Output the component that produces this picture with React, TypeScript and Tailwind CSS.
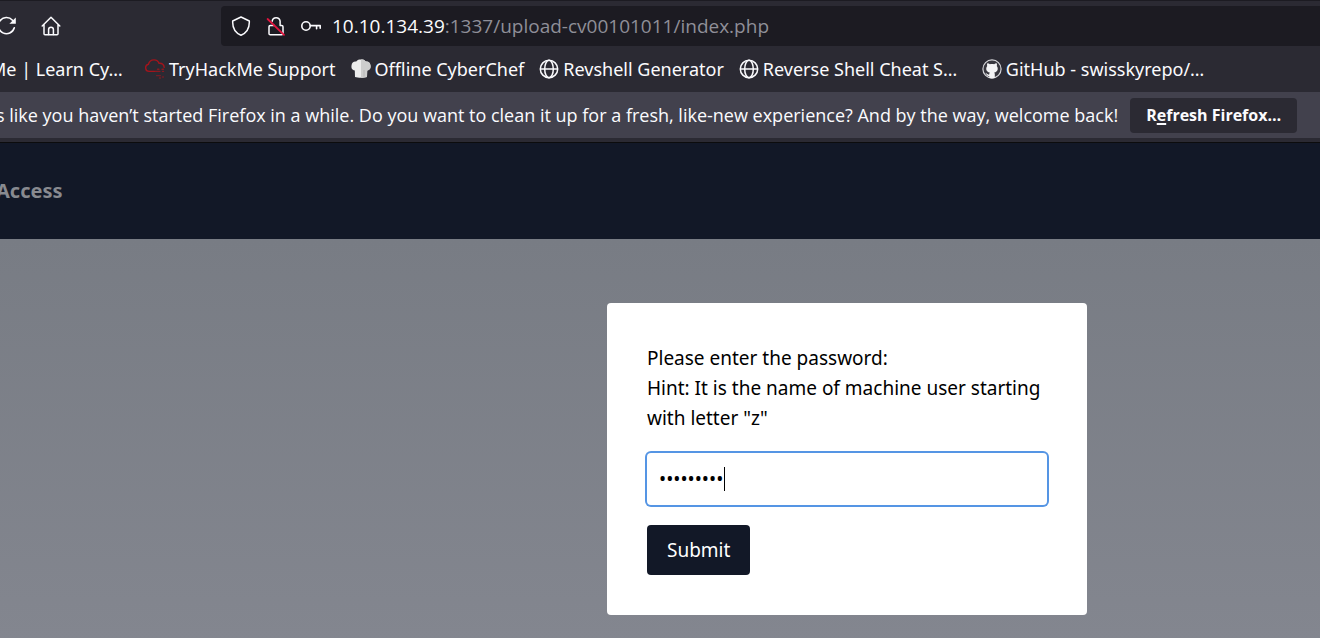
import type { ReactNode } from "react";

function ReloadIcon() {
  return (
    <svg width="20" height="20" viewBox="0 0 20 20" fill="none" stroke="#fbfbfe" strokeWidth="1.6" strokeLinecap="round">
      <path d="M15.5 4.2a8.1 8.1 0 1 0 1.8 7.6" />
      <path d="M18.8 1.4v6.400h-6.400z" fill="#fbfbfe" stroke="none" />
    </svg>
  );
}

function HomeIcon() {
  return (
    <svg width="20" height="20" viewBox="0 0 20 20" fill="none" stroke="#fbfbfe" strokeWidth="1.5" strokeLinecap="round" strokeLinejoin="round">
      <path d="M1.2 10 10 1.2l8.8 8.8M3 8.6v9.2c0 .6.4 1 1 1h12c.6 0 1-.4 1-1V8.6" />
      <path d="M7.6 18.6v-5c0-1.4 1-2.4 2.4-2.4s2.4 1 2.4 2.4v5" />
    </svg>
  );
}

function ShieldIcon() {
  return (
    <svg width="20" height="20" viewBox="0 0 20 20" fill="none" stroke="#fbfbfe" strokeWidth="1.5" strokeLinejoin="round">
      <path d="M10 1 18.3 5c.3 5.8-1.6 11.3-8.3 14.2C3.3 16.3 1.4 10.8 1.7 5z" />
    </svg>
  );
}

function InsecureIcon() {
  return (
    <svg width="20" height="20" viewBox="0 0 20 20" fill="none" strokeLinecap="round" strokeLinejoin="round">
      <path
        d="M6.2 5.2a4 4 0 0 1 7.9 0v4.3h1.6c.8 0 1.3.5 1.3 1.3v6.8c0 .8-.5 1.200-1.300 1.200H4.300c-.8 0-1.300-.4-1.300-1.200v-6.800c0-.8.5-1.300 1.300-1.300h4"
        stroke="#fbfbfe"
        strokeWidth="1.5"
      />
      <path d="M1.600 3 18 18.800" stroke="#e2153f" strokeWidth="1.8" />
    </svg>
  );
}

function KeyIcon() {
  return (
    <svg width="20" height="20" viewBox="0 0 20 20" fill="none" stroke="#fbfbfe" strokeWidth="1.6" strokeLinecap="round" strokeLinejoin="round">
      <circle cx="5" cy="10" r="4.2" />
      <path d="M9.4 9.6h9.8v2.6M15.6 9.6v3.2" />
    </svg>
  );
}

function CloudIcon() {
  return (
    <svg width="20" height="20" viewBox="0 0 20 20" fill="none" stroke="#a3141c" strokeWidth="1.4" strokeLinecap="round">
      <path d="M9.500 12.400H4a3.600 3.600 0 0 1-.6-7.100C4.200 2.400 6.400.9 9 .9c2.500 0 4.300 1.300 5 3.400 2.800-.2 4.800 1.400 5.200 4" />
      <path d="M12.500 10.200h1.500M17 10.200h1.500M9.800 12.400h5M17.500 12.400h1" opacity="0.8" />
      <path d="M11.500 16.600h4M14.500 19h1M17.500 18h1" opacity="0.6" />
    </svg>
  );
}

function ChefIcon() {
  return (
    <svg width="20" height="20" viewBox="0 0 20 20">
      <path
        d="M4 18 3.800 11.500C.8 11 .2 9 .5 6.500.8 3.500 2.800 2.200 5.200 2.600 6.500.8 8 .5 10 .5s3.500.3 4.800 2.100c2.400-.4 4.400.9 4.700 3.900.3 2.500-.3 4.500-3.300 5L16 18c-3 1-9 1-12 0z"
        fill="#ececec"
      />
      <path d="M10 .5c2 0 3.500.3 4.800 2.100 2.400-.4 4.400.9 4.700 3.900.3 2.500-.3 4.500-3.300 5L16 18c-1.500.5-4 .8-6 .8z" fill="#cdcdcd" />
      <path d="M13 11v6.500" stroke="#b0b0b0" strokeWidth="0.8" />
    </svg>
  );
}

function GlobeIcon() {
  return (
    <svg width="20" height="20" viewBox="0 0 20 20" fill="none" stroke="#fbfbfe" strokeWidth="1.5">
      <circle cx="10" cy="10" r="8.7" />
      <ellipse cx="10" cy="10" rx="4.3" ry="8.7" />
      <path d="M1.3 10h17.4" />
    </svg>
  );
}

function GitHubIcon() {
  return (
    <svg width="20" height="20" viewBox="0 0 20 20">
      <circle cx="10" cy="10" r="9.1" fill="#38373f" stroke="#d4d4d8" strokeWidth="1.2" />
      <path
        d="M5.3 4.3c.9-.1 1.800.4 2.600 1 1.400-.3 2.800-.3 4.200 0 .8-.6 1.700-1.100 2.600-1 .4 1 .4 1.900.1 2.600 1.700 2.200 1.200 6-2.600 6.500.4.500.6 1.100.6 1.800v3.500c-1.800.7-3.800.7-5.600 0v-1.800c-1.600.3-2.300-.3-2.700-1.300-.2-.5-.6-.9-1-1.200 1.800-.3 1.800 1.700 3.700 1.200 0-.9.200-1.600.6-2.200-3.800-.5-4.300-4.300-2.600-6.500-.3-.7-.3-1.600.1-2.600z"
        fill="#f4f4f6"
      />
    </svg>
  );
}

function Bookmark({ icon, children }: { icon?: ReactNode; children: ReactNode }) {
  return (
    <a href="#" className="flex shrink-0 items-center gap-1 whitespace-nowrap">
      {icon}
      <span>{children}</span>
    </a>
  );
}

export default function App() {
  return (
    <div className="flex min-h-screen flex-col overflow-hidden bg-[#2b2a33] font-['Noto_Sans','Open_Sans',sans-serif] text-[#fbfbfe]">
      <div className="flex items-center border-t border-[#1c1b22] pt-[5px]">
        <div className="flex w-[221px] shrink-0 items-center gap-6">
          <button aria-label="Reload" className="-ml-[3px]">
            <ReloadIcon />
          </button>
          <button aria-label="Home">
            <HomeIcon />
          </button>
        </div>
        <div className="flex h-10 flex-1 items-center gap-[15px] rounded-l bg-[#1c1b22] px-2.5 text-[19px]">
          <ShieldIcon />
          <InsecureIcon />
          <KeyIcon />
          <p className="-ml-1 whitespace-nowrap font-['Open_Sans',sans-serif] text-[#8f8f98]">
            <span className="text-[#fbfbfe]">10.10.134.39</span>:1337/upload-cv00101011/index.php
          </p>
        </div>
      </div>

      <nav aria-label="Bookmarks" className="flex h-[46px] items-center gap-[15px] text-lg">
        <div className="-ml-2.5 flex w-[140px] shrink-0">
          <Bookmark>Me | Learn Cy…</Bookmark>
        </div>
        <Bookmark icon={<CloudIcon />}>TryHackMe Support</Bookmark>
        <Bookmark icon={<ChefIcon />}>Offline CyberChef</Bookmark>
        <Bookmark icon={<GlobeIcon />}>Revshell Generator</Bookmark>
        <div className="flex w-[228px] shrink-0">
          <Bookmark icon={<GlobeIcon />}>Reverse Shell Cheat S…</Bookmark>
        </div>
        <Bookmark icon={<GitHubIcon />}>GitHub - swisskyrepo/…</Bookmark>
      </nav>

      <div className="flex h-[46px] items-center gap-3 bg-[#42414d] font-['Open_Sans',sans-serif] text-lg">
        <p className="-ml-1 whitespace-nowrap">
          s like you haven’t started Firefox in a while. Do you want to clean it up for a fresh, like-new experience? And by the way, welcome back!
        </p>
        <button className="h-[35px] shrink-0 rounded bg-[#2b2a33] px-4 text-base font-bold">
          R<span className="underline decoration-2 underline-offset-2">e</span>fresh Firefox…
        </button>
      </div>
      <div className="h-[5px] border-b border-[#0c0c0d]" />

      <header className="flex h-24 items-center bg-[#121827]">
        <h1 className="-ml-1 text-xl font-bold text-[#888a90]">Access</h1>
      </header>

      <main className="flex flex-1 items-start justify-center bg-linear-to-b from-[#787c84] to-[#83868f] pt-16 pb-[23px] pl-[374px]">
        <form onSubmit={(e) => e.preventDefault()} className="w-[480px] rounded bg-white p-10 text-[19px] leading-[30px] text-black">
          <label htmlFor="password" className="block">
            Please enter the password:
            <br />
            Hint: It is the name of machine user starting with letter "z"
          </label>
          <div className="relative mt-5 flex items-center">
            <input
              id="password"
              type="password"
              defaultValue="zzzzzzzzz"
              className="h-[52px] w-full rounded bg-white px-3 ring-2 ring-[#5595e4] outline-none"
            />
            <span aria-hidden="true" className="absolute left-[77px] h-6 w-px bg-black" />
          </div>
          <button type="submit" className="mt-5 block h-[50px] rounded bg-[#121827] px-5 text-white">
            Submit
          </button>
        </form>
      </main>
    </div>
  );
}
